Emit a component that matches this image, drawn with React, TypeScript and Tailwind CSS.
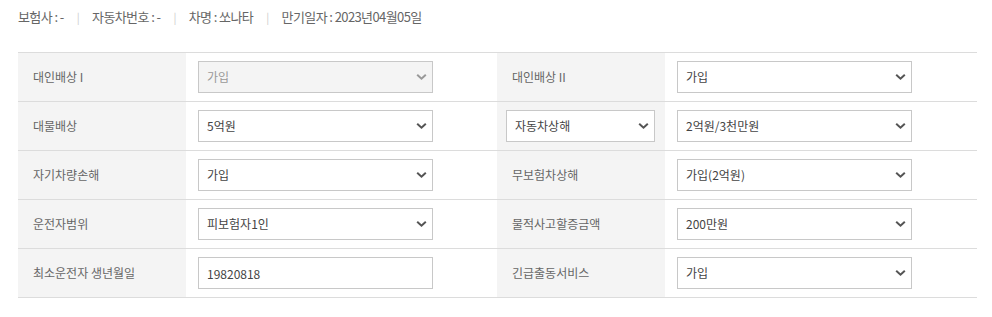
import { ReactNode } from 'react'

const font = { fontFamily: '"Noto Sans CJK KR", "Noto Sans", sans-serif' }

function Chevron({ muted }: { muted?: boolean }) {
  return (
    <svg width="11" height="7" viewBox="0 0 11 7" className="pointer-events-none absolute right-[6px] top-1/2 -translate-y-1/2">
      <path d="M1.2 1.2 L5.5 5.2 L9.8 1.2" fill="none" stroke={muted ? '#999' : '#555'} strokeWidth="2" />
    </svg>
  )
}

function Select({ value, disabled, width = 'w-[235px]' }: { value: string; disabled?: boolean; width?: string }) {
  return (
    <div className={`relative h-[32px] ${width}`}>
      <select
        defaultValue={value}
        disabled={disabled}
        className={`h-full w-full appearance-none rounded-none border border-[#c8c8c8] pl-[8px] text-[12px] outline-none ${
          disabled ? 'bg-[#f4f4f4] text-[#999]' : 'bg-white text-[#444]'
        }`}
        style={font}
      >
        <option>{value}</option>
      </select>
      <Chevron muted={disabled} />
    </div>
  )
}

function Label({ children }: { children: ReactNode }) {
  return (
    <div className="flex items-center bg-[#f4f4f4] pl-[15px] text-[12px] text-[#666]">{children}</div>
  )
}

function Value({ children }: { children: ReactNode }) {
  return <div className="flex items-center pl-[12px]">{children}</div>
}

function Row({ children }: { children: ReactNode }) {
  return (
    <div className="grid h-[49px] grid-cols-[168px_311px_168px_1fr] border-b border-[#dcdcdc]">{children}</div>
  )
}

export default function App() {
  const info = ['보험사 : -', '자동차번호 : -', '차명 : 쏘나타', '만기일자 : 2023년04월05일']
  return (
    <div className="h-[317px] w-[992px] bg-white" style={font}>
      <div className="flex items-center pl-[18px] pt-[7px] text-[13px] leading-[20px] tracking-[-0.6px] text-[#666]">
        {info.map((t, i) => (
          <span key={t} className="flex items-center">
            {i > 0 && <span className="mx-[13px] text-[11px] text-[#ccc]">|</span>}
            {t}
          </span>
        ))}
      </div>
      <div className="ml-[18px] mt-[25px] w-[959px] border-t border-[#dcdcdc]">
        <Row>
          <Label>대인배상 I</Label>
          <Value>
            <Select value="가입" disabled />
          </Value>
          <Label>대인배상 II</Label>
          <Value>
            <Select value="가입" />
          </Value>
        </Row>
        <Row>
          <Label>대물배상</Label>
          <Value>
            <Select value="5억원" />
          </Value>
          <div className="flex items-center bg-[#f4f4f4] pl-[9px]">
            <Select value="자동차상해" width="w-[149px]" />
          </div>
          <Value>
            <Select value="2억원/3천만원" />
          </Value>
        </Row>
        <Row>
          <Label>자기차량손해</Label>
          <Value>
            <Select value="가입" />
          </Value>
          <Label>무보험차상해</Label>
          <Value>
            <Select value="가입(2억원)" />
          </Value>
        </Row>
        <Row>
          <Label>운전자범위</Label>
          <Value>
            <Select value="피보험자1인" />
          </Value>
          <Label>물적사고할증금액</Label>
          <Value>
            <Select value="200만원" />
          </Value>
        </Row>
        <Row>
          <Label>최소운전자 생년월일</Label>
          <Value>
            <input
              defaultValue="19820818"
              className="h-[32px] w-[235px] rounded-none border border-[#c8c8c8] pl-[8px] text-[12px] text-[#444] outline-none"
              style={font}
            />
          </Value>
          <Label>긴급출동서비스</Label>
          <Value>
            <Select value="가입" />
          </Value>
        </Row>
      </div>
    </div>
  )
}
